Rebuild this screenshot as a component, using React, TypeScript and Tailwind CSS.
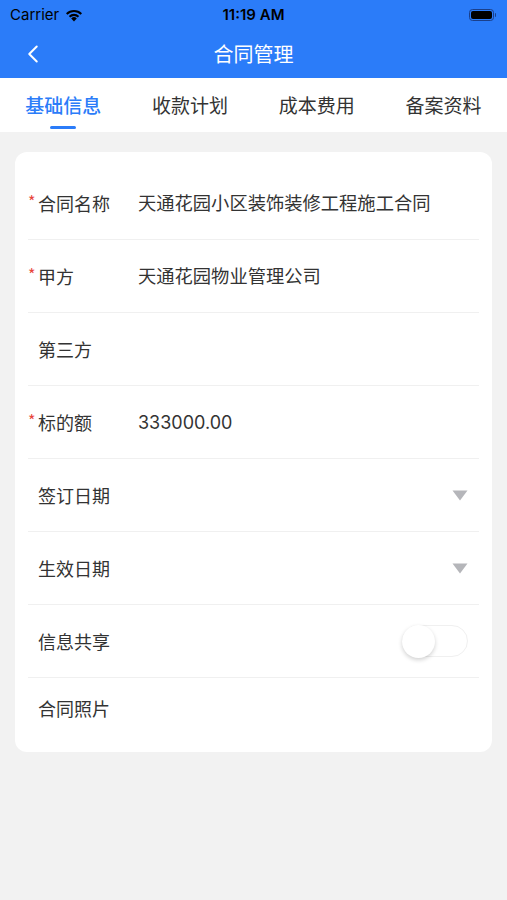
import { ChevronLeft } from 'lucide-react';

const font = { fontFamily: '"PingFang SC", "Noto Sans CJK SC", "Noto Sans", sans-serif' };

type Row = {
  label: string;
  value?: string;
  required?: boolean;
  kind?: 'text' | 'select' | 'switch';
};

const rows: Row[] = [
  { label: '合同名称', value: '天通花园小区装饰装修工程施工合同', required: true },
  { label: '甲方', value: '天通花园物业管理公司', required: true },
  { label: '第三方' },
  { label: '标的额', value: '333000.00', required: true },
  { label: '签订日期', kind: 'select' },
  { label: '生效日期', kind: 'select' },
  { label: '信息共享', kind: 'switch' },
];

const tabs = ['基础信息', '收款计划', '成本费用', '备案资料'];

function StatusBar() {
  return (
    <div className="relative flex h-[30px] items-center justify-between px-[10px] text-black">
      <div className="flex items-center gap-[6px] text-[15px]" style={{ fontFamily: '"Inter", "Liberation Sans", sans-serif' }}>
        <span>Carrier</span>
        <svg width="18" height="13" viewBox="0 0 18 13">
          <path d="M9 12.5 L6.2 9.4 A4 4 0 0 1 11.8 9.4 Z" fill="#000" />
          <path d="M3.8 7 A7.4 7.4 0 0 1 14.2 7 L12.8 8.5 A5.4 5.4 0 0 0 5.2 8.5 Z" fill="#000" />
          <path d="M1 4.2 A11.3 11.3 0 0 1 17 4.2 L15.6 5.7 A9.3 9.3 0 0 0 2.4 5.7 Z" fill="#000" />
        </svg>
      </div>
      <span className="absolute left-1/2 -translate-x-1/2 text-[15px] font-semibold" style={{ fontFamily: '"Inter", "Liberation Sans", sans-serif' }}>
        11:19 AM
      </span>
      <div className="flex items-center pr-[1px]">
        <div className="h-[12px] w-[25px] rounded-[3.5px] border border-[#1a3f8a] p-[1px]">
          <div className="h-full w-full rounded-[2px] bg-black" />
        </div>
        <div className="ml-[1px] h-[4px] w-[1.5px] rounded-r bg-[#1a3f8a]" />
      </div>
    </div>
  );
}

function FormRow({ row }: { row: Row }) {
  const isNumber = row.value !== undefined && /^[\d.]+$/.test(row.value);
  return (
    <div className="flex h-[73px] items-center border-b border-[#f0f0f0]">
      <div className="flex w-[110px] items-center text-[18px] text-[#333]">
        <span className={`w-[10px] -translate-y-[2px] text-[16px] leading-none text-[#e8453c] ${row.required ? '' : 'invisible'}`}>*</span>
        <span>{row.label}</span>
      </div>
      <div
        className={`flex-1 text-[#333] ${isNumber ? 'text-[18px]' : 'text-[18.3px]'}`}
        style={isNumber ? { fontFamily: '"Inter", "Liberation Sans", sans-serif' } : undefined}
      >
        {row.value}
      </div>
      {row.kind === 'select' && (
        <svg width="16" height="11" viewBox="0 0 16 11" className="mr-[11px]">
          <path d="M0.5 0.5 H15.5 L8 10.5 Z" fill="#b5b6ba" />
        </svg>
      )}
      {row.kind === 'switch' && (
        <div className="relative mr-[11px] h-[32px] w-[66px] rounded-full border border-[#f0f0f0] bg-white">
          <div className="absolute left-[-1px] top-[-1px] h-[33px] w-[33px] rounded-full bg-white shadow-[0_2px_4px_rgba(0,0,0,0.18)]" />
        </div>
      )}
    </div>
  );
}

export default function App() {
  return (
    <div className="min-h-[900px] bg-[#f2f2f2]" style={font}>
      <div className="bg-[#2b7cf9]">
        <StatusBar />
        <div className="relative flex h-[48px] items-center justify-center">
          <ChevronLeft className="absolute left-[18px] h-[30px] w-[30px] text-white" strokeWidth={1.6} />
          <span className="text-[20px] text-white">合同管理</span>
        </div>
      </div>

      <div className="grid h-[54px] grid-cols-4 bg-white">
        {tabs.map((t, i) => (
          <div key={t} className="relative flex items-center justify-center">
            <span className={`text-[19px] ${i === 0 ? 'font-medium text-[#2b7cf9]' : 'text-[#333]'}`}>{t}</span>
            {i === 0 && <div className="absolute bottom-[3px] h-[3px] w-[26px] rounded-full bg-[#2b7cf9]" />}
          </div>
        ))}
      </div>

      <div className="mx-[15px] mt-[20px] rounded-[12px] bg-white px-[13px] pb-[13px] pt-[15px]">
        {rows.map((r) => (
          <FormRow key={r.label} row={r} />
        ))}
        <div className="flex h-[61px] items-center pl-[10px] text-[18px] text-[#333]">合同照片</div>
      </div>
    </div>
  );
}
